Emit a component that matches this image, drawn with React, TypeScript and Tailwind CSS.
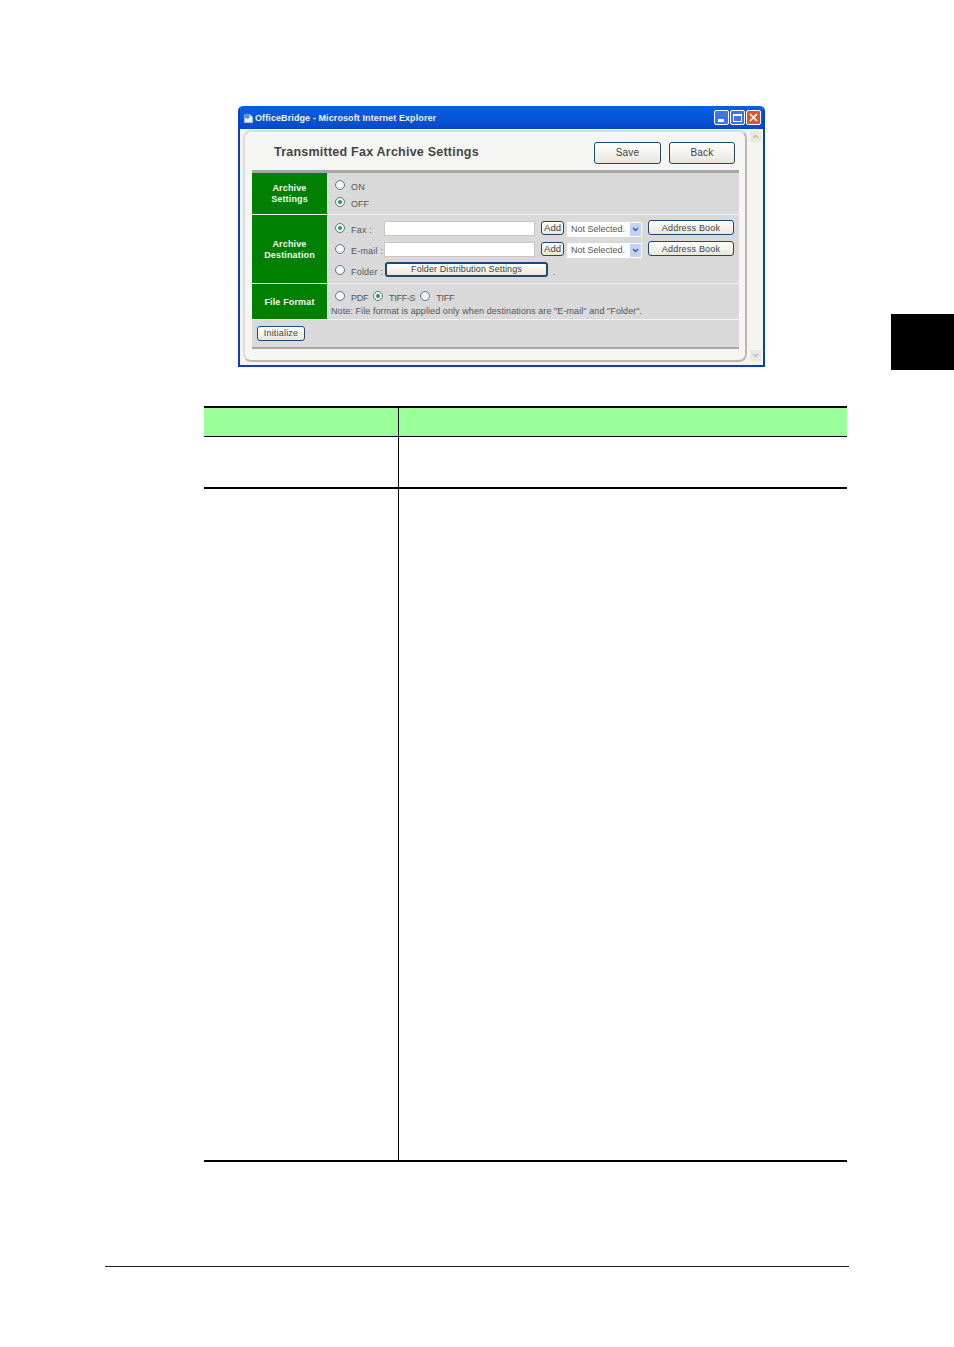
const font = { fontFamily: '"Liberation Sans", Arial, sans-serif' }

function Radio({ on = false }: { on?: boolean }) {
  return (
    <span className="flex h-[10px] w-[10px] shrink-0 items-center justify-center rounded-full border border-[#5a7a96] bg-[#f4f4f0]">
      {on && <span className="h-[4px] w-[4px] rounded-full bg-[#2f9a3c]" />}
    </span>
  )
}

function Btn({ label, className }: { label: string; className: string }) {
  return (
    <div
      className={`flex items-center justify-center rounded-[3px] border border-[#24486b] bg-gradient-to-b from-white to-[#e8e6dc] text-[#444] ${className}`}
    >
      {label}
    </div>
  )
}

function SelectBox() {
  return (
    <div className="mt-[2px] flex h-[15px] w-[75px] items-center justify-between bg-white pl-[4px] pr-[1px]">
      <span className="text-[9px] tracking-normal text-[#555]">Not Selected.</span>
      <span className="flex h-[13px] w-[11px] items-center justify-center bg-[#c3d3f5]">
        <svg width="7" height="5" viewBox="0 0 7 5">
          <path d="M1 1 L3.5 3.5 L6 1" fill="none" stroke="#3b5d9a" strokeWidth="1.4" />
        </svg>
      </span>
    </div>
  )
}

function SideCell({ children }: { children: React.ReactNode }) {
  return (
    <div className="flex h-full w-[75px] shrink-0 flex-col items-center justify-center bg-[#008000] pt-[1px] text-center text-[9px] font-bold leading-[11px] tracking-[0.15px] text-[#f2f7f2]">
      {children}
    </div>
  )
}

function RadioLabel({ on, label, className }: { on?: boolean; label: string; className: string }) {
  return (
    <div className="flex h-[12px] items-center gap-[6px]">
      <Radio on={on} />
      <span className={`mt-[5px] ${className}`}>{label}</span>
    </div>
  )
}

function AddressRow({ on, label }: { on?: boolean; label: string }) {
  return (
    <div className="flex h-[16px] items-start">
      <div className="mt-[2px]">
        <RadioLabel on={on} label={label} className="w-[33px]" />
      </div>
      <div className="mt-[1px] h-[15px] w-[151px] border border-[#c8c8c0] bg-white" />
      <Btn label="Add" className="ml-[6px] mt-[1px] h-[14px] w-[23px] pb-[1px] text-[9.5px] tracking-normal" />
      <div className="ml-[3px]">
        <SelectBox />
      </div>
      <Btn label="Address Book" className="ml-[6px] h-[15px] w-[86px] pt-[1px] text-[9px]" />
    </div>
  )
}

function ScrollArrow({ up = false }: { up?: boolean }) {
  return (
    <div className="flex h-[11px] w-[11px] items-center justify-center rounded-[1px] bg-[#e9e8e1]">
      <svg width="7" height="5" viewBox="0 0 7 5">
        <path d={up ? 'M1 4 L3.5 1.5 L6 4' : 'M1 1 L3.5 3.5 L6 1'} fill="none" stroke="#bdbdb5" strokeWidth="1.3" />
      </svg>
    </div>
  )
}

function Window() {
  return (
    <div className="flex h-[261px] w-[527px] shrink-0 flex-col rounded-t-[5px] border-x-[2px] border-b-[2px] border-[#0a3cc4] bg-[#f4f3ec]">
      {/* title bar */}
      <div className="flex h-[23px] shrink-0 items-center rounded-t-[4px] bg-gradient-to-b from-[#0a5fe0] via-[#0656dc] to-[#0a46c8] pl-[3px] pr-[2px]">
        <svg width="11" height="12" viewBox="0 0 11 12" className="mr-[1px]">
          <path d="M1 2 H7 L10 5 V11 H1 Z" fill="#e8eef8" stroke="#3c5a8a" strokeWidth="0.7" />
          <circle cx="4" cy="4" r="2.6" fill="#3f9ae0" />
        </svg>
        <span className="mt-[3px] text-[9px] font-bold tracking-[0.1px] text-[#eef3fd]">OfficeBridge - Microsoft Internet Explorer</span>
        <div className="ml-auto flex gap-[1px]">
          <div className="flex h-[15px] w-[15px] items-end rounded-[2px] border border-white bg-[#3d74e6] pb-[2px] pl-[3px]">
            <span className="h-[3px] w-[6px] bg-white" />
          </div>
          <div className="flex h-[15px] w-[15px] items-center justify-center rounded-[2px] border border-white bg-[#3d74e6]">
            <span className="h-[8px] w-[9px] border border-t-2 border-white" />
          </div>
          <div className="flex h-[15px] w-[15px] items-center justify-center rounded-[2px] border border-white bg-[#e0532f]">
            <svg width="9" height="9" viewBox="0 0 9 9">
              <path d="M1 1 L8 8 M8 1 L1 8" stroke="#fff" strokeWidth="1.6" />
            </svg>
          </div>
        </div>
      </div>

      <div className="flex min-h-0 flex-1 pl-[3px] pt-[1px]">
        {/* page panel */}
        <div className="flex h-[232px] w-[504px] shrink-0 flex-col rounded-[8px] border-2 border-t-[#dcdcd8] border-l-[#dcdcd8] border-r-[#b8b8b8] border-b-[#b8b8b8] bg-[#f5f5f3] pl-[7px] pr-[6px] text-[9px] leading-[11px] tracking-[0.2px] text-[#555]">
          <div className="flex h-[38px] shrink-0 items-center pl-[22px] pt-[3px]">
            <h1 className="text-[12.5px] font-bold tracking-[0.23px] text-[#454545]">Transmitted Fax Archive Settings</h1>
            <Btn label="Save" className="ml-auto h-[22px] w-[67px] text-[10px]" />
            <Btn label="Back" className="ml-[8px] mr-[4px] h-[22px] w-[66px] text-[10px]" />
          </div>
          <div className="h-[3px] shrink-0 bg-[#a6a6a6]" />

          {/* Archive Settings */}
          <div className="flex h-[41px] shrink-0 bg-[#d9d9d9]">
            <SideCell>
              <span>Archive</span>
              <span>Settings</span>
            </SideCell>
            <div className="flex flex-col gap-[5px] pl-[8px] pt-[6px]">
              <RadioLabel label="ON" className="" />
              <RadioLabel on label="OFF" className="tracking-normal" />
            </div>
          </div>
          <div className="h-[1px] shrink-0 bg-[#f3f3f3]" />

          {/* Archive Destination */}
          <div className="flex h-[68px] shrink-0 bg-[#d9d9d9]">
            <SideCell>
              <span>Archive</span>
              <span>Destination</span>
            </SideCell>
            <div className="flex min-w-0 flex-1 flex-col gap-[5px] pl-[8px] pt-[5px]">
              <AddressRow on label="Fax :" />
              <AddressRow label="E-mail :" />
              <div className="flex h-[16px] items-start">
                <div className="mt-[2px]">
                  <RadioLabel label="Folder :" className="w-[34px]" />
                </div>
                <Btn label="Folder Distribution Settings" className="h-[15px] w-[163px] border-2 text-[9px] tracking-[0.1px]" />
                <span className="ml-[5px] mt-[5px]">.</span>
              </div>
            </div>
          </div>
          <div className="h-[1px] shrink-0 bg-[#f3f3f3]" />

          {/* File Format */}
          <div className="flex h-[35px] shrink-0 bg-[#d9d9d9]">
            <SideCell>
              <span>File Format</span>
            </SideCell>
            <div className="flex min-w-0 flex-1 flex-col pl-[4px] pt-[6px]">
              <div className="flex h-[12px] gap-[4px] pl-[4px]">
                <RadioLabel label="PDF" className="mr-[1px] tracking-[-0.3px]" />
                <RadioLabel on label="TIFF-S" className="mr-[1px] tracking-[-0.3px]" />
                <RadioLabel label="TIFF" className="tracking-[-0.3px]" />
              </div>
              <p className="mt-[3px] whitespace-nowrap text-[9px] leading-[12px] tracking-[0.08px]">
                Note: File format is applied only when destinations are "E-mail" and "Folder".
              </p>
            </div>
          </div>
          <div className="h-[1px] shrink-0 bg-[#f3f3f3]" />

          {/* Initialize */}
          <div className="h-[27px] shrink-0 bg-[#d9d9d9] pl-[5px] pt-[6px]">
            <Btn label="Initialize" className="h-[15px] w-[48px] text-[9px]" />
          </div>
          <div className="h-[2px] shrink-0 bg-[#a6a6a6]" />
        </div>

        {/* scrollbar */}
        <div className="ml-[3px] flex h-[232px] flex-col justify-between py-[1px]">
          <ScrollArrow up />
          <ScrollArrow />
        </div>
      </div>
    </div>
  )
}

export default function App() {
  return (
    <div className="h-[1347px] w-[954px] bg-white pt-[106px]" style={font}>
      <div className="flex h-[264px] pl-[238px]">
        <Window />
        <div className="ml-auto mt-[208px] h-[56px] w-[63px] bg-black" />
      </div>

      {/* empty table */}
      <div className="ml-[204px] mt-[36px] w-[643px] border-t-2 border-black">
        <div className="flex h-[29px] border-b border-black bg-[#99ff99]">
          <div className="w-[195px] border-r border-black" />
        </div>
        <div className="flex h-[52px] border-b-2 border-black">
          <div className="w-[195px] border-r border-black" />
        </div>
        <div className="flex h-[673px] border-b-2 border-black">
          <div className="w-[195px] border-r border-black" />
        </div>
      </div>

      <div className="ml-[105px] mt-[104px] h-[1px] w-[744px] bg-[#222]" />
    </div>
  )
}
